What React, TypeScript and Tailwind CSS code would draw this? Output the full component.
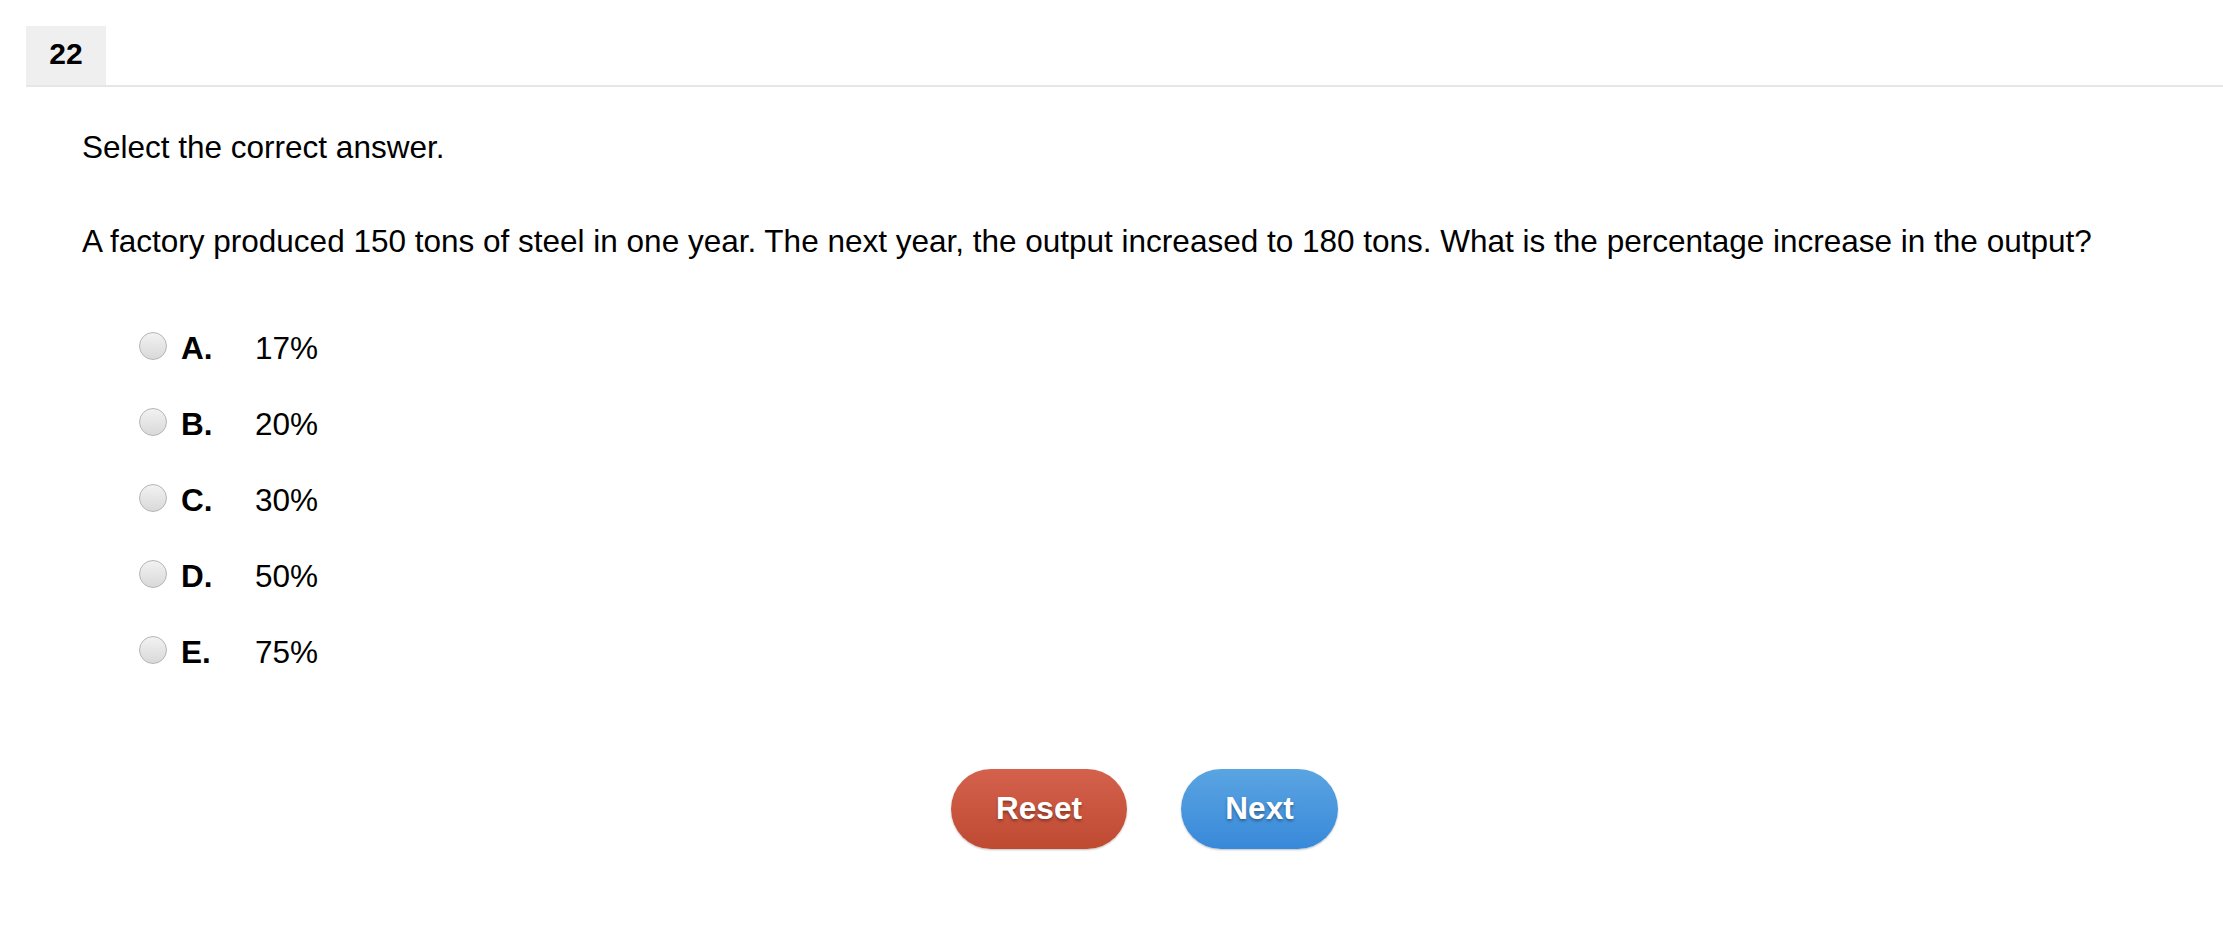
import * as React from 'react';

const options = [
  { key: 'A', value: '17%' },
  { key: 'B', value: '20%' },
  { key: 'C', value: '30%' },
  { key: 'D', value: '50%' },
  { key: 'E', value: '75%' },
];

export default function App() {
  const [selected, setSelected] = React.useState<string | null>(null);

  return (
    <div className="min-h-screen bg-white text-black" style={{ fontFamily: '"Liberation Sans", Arial, sans-serif' }}>
      <div className="pl-[26px] pt-[26px]">
        {/* question number tab */}
        <div className="border-b-2 border-[#e6e6e6]">
          <div className="flex h-[59px] w-[80px] items-center justify-center bg-[#efefef] pb-[5px] text-[30px] font-bold">
            22
          </div>
        </div>

        <div className="pl-[56px] pt-[39px]">
          <p className="text-[31.5px] leading-[42px]">Select the correct answer.</p>
          <p className="mt-[52px] text-[31.5px] leading-[42px]">
            A factory produced 150 tons of steel in one year. The next year, the output increased to 180 tons. What
            is the percentage increase in the output?
          </p>

          <div className="mt-[66px] flex flex-col gap-[34px] pl-[57px]">
            {options.map((o) => (
              <label key={o.key} className="flex h-[42px] cursor-pointer items-center">
                <span
                  onClick={() => setSelected(o.key)}
                  className={`mb-[7px] h-[28px] w-[28px] shrink-0 rounded-full border border-[#b5b5b5] bg-gradient-to-b from-[#f2f2f2] to-[#d9d9d9] ${
                    selected === o.key ? 'ring-4 ring-inset ring-[#3a8bdb]' : ''
                  }`}
                />
                <span className="ml-[14px] w-[74px] text-[31.5px] font-bold">{o.key}.</span>
                <span className="text-[31.5px]">{o.value}</span>
              </label>
            ))}
          </div>

          <div className="mt-[95px] flex justify-center gap-[54px] pr-[16px]">
            <button
              onClick={() => setSelected(null)}
              className="h-[80px] w-[176px] rounded-full bg-gradient-to-b from-[#d4614c] to-[#bf4a32] text-[31.5px] font-bold text-white shadow-[0_1px_2px_rgba(0,0,0,0.25)] [text-shadow:0_2px_3px_rgba(0,0,0,0.35)]"
            >
              Reset
            </button>
            <button className="h-[80px] w-[157px] rounded-full bg-gradient-to-b from-[#5aa4e1] to-[#3889da] text-[31.5px] font-bold text-white shadow-[0_1px_2px_rgba(0,0,0,0.25)] [text-shadow:0_2px_3px_rgba(0,0,0,0.35)]">
              Next
            </button>
          </div>
        </div>
      </div>
    </div>
  );
}
